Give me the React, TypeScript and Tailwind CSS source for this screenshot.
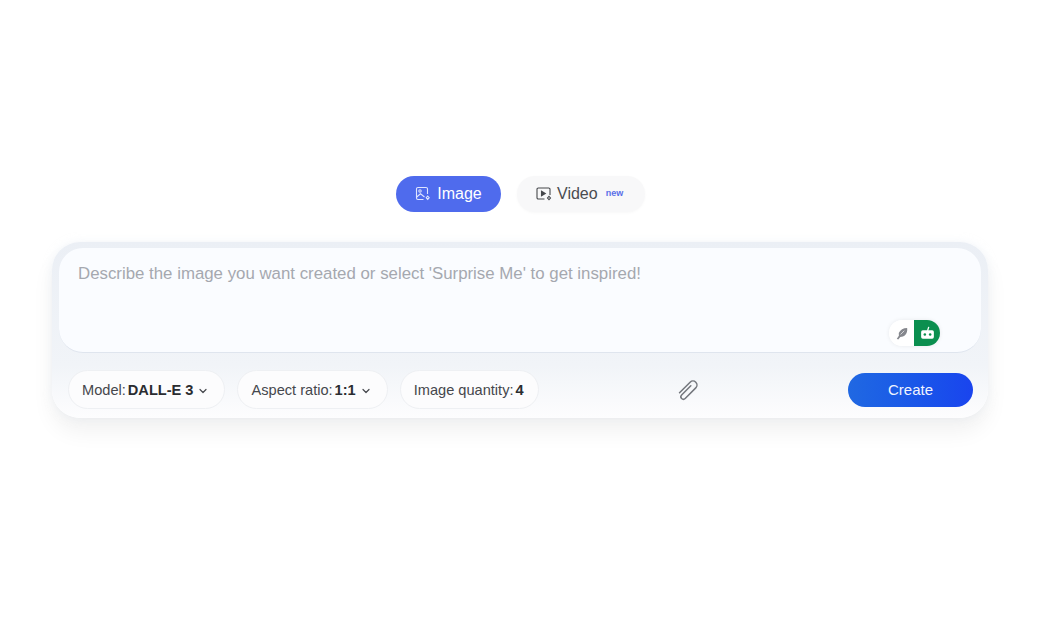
import { ChevronDown } from "lucide-react";

function ImageIcon({ className }: { className?: string }) {
  return (
    <svg viewBox="0 0 16 16" fill="none" stroke="currentColor" strokeWidth="1.1" className={className}>
      <path d="M8.500 13.500H3a1.500 1.500 0 0 1-1.500-1.500V3A1.500 1.500 0 0 1 3 1.500h8A1.500 1.500 0 0 1 12.500 3v5" />
      <circle cx="5" cy="5" r="1.200" />
      <path d="M1.700 11 5.500 7.800 9.500 11" />
      <path d="m12.700 10 1.500 1.700-1.500 1.700-1.500-1.700z" />
    </svg>
  );
}

function VideoIcon({ className }: { className?: string }) {
  return (
    <svg viewBox="0 0 16 16" fill="none" stroke="currentColor" strokeWidth="1.1" className={className}>
      <path d="M8.500 13H2.300A1.300 1.300 0 0 1 1 11.700V3.300A1.300 1.300 0 0 1 2.300 2h10.400A1.300 1.300 0 0 1 14 3.300V9" />
      <path d="M5.500 5.200v4.600l3.800-2.300z" fill="currentColor" />
      <path d="m13 10.300 1.500 1.700-1.500 1.700-1.500-1.700z" />
    </svg>
  );
}

function Pill({ label, value, chevron }: { label: string; value: string; chevron?: boolean }) {
  return (
    <div className="flex h-[39px] items-center rounded-[20px] border border-[#eef0f3] bg-[#fcfcfd] pl-[13px] pr-[14px] pt-[2px] text-[14.6px] text-[#45474c]">
      <span>{label}</span>
      <b className="ml-[2px] font-bold text-[#2a2c30]">{value}</b>
      {chevron && <ChevronDown className="ml-[4px] mr-[1px] size-[12px]" strokeWidth={2.4} />}
    </div>
  );
}

export default function App() {
  return (
    <div className="h-[620px] w-[1050px] overflow-hidden bg-white pt-[176px] font-['Liberation_Sans',Arial,sans-serif]">
      <div className="ml-[396px] flex items-center gap-4">
        <button className="flex h-9 w-[105px] items-center justify-center gap-[6px] rounded-[18px] bg-[#4f6bed] text-[16px] text-white">
          <ImageIcon className="size-[16px] text-[#dfe5ff]" />
          Image
        </button>
        <button className="flex h-9 w-[128px] items-center gap-[5px] rounded-[18px] bg-[#f8f8f9] pl-[19px] text-[16px] text-[#4a4c50] shadow-[0_1px_3px_rgba(0,0,0,0.03)]">
          <VideoIcon className="size-[16px] text-[#45474b]" />
          Video
          <span className="mb-[1px] ml-[3px] text-[9px] font-bold text-[#5a70e8]">new</span>
        </button>
      </div>

      <div className="ml-[52px] mt-[30px] h-[176px] w-[936px] rounded-[28px] bg-gradient-to-b from-[#ebeff5] via-[#f1f4f8] via-70% to-[#fdfdfe] px-[7px] pt-[6px] shadow-[0_14px_22px_rgba(0,0,0,0.055),0_0_10px_rgba(220,228,240,0.35)]">
        <div className="relative h-[105px] rounded-[24px] border-b border-[#dfe5ee] bg-[#fafcff] px-[19px] pt-[13px] text-[16.84px] text-[#a5a8af]">
          Describe the image you want created or select 'Surprise Me' to get inspired!
          <div className="absolute bottom-[6px] right-[41px] flex h-[26px] w-[51px] overflow-hidden rounded-[13px] shadow-[0_0_4px_rgba(0,0,0,0.08)]">
            <div className="flex w-[25px] items-center justify-center bg-white">
              <svg viewBox="0 0 16 16" className="size-[15px] text-[#85878d]" fill="currentColor">
                <path d="M14 2c.6 3.800-1 7.800-4.500 9.300l-2.800.4-2.200 2.800-1.500-1 2.200-3-.1-3C6.500 4 10 2 14 2z" />
                <path d="m7 9 4-4" stroke="#fff" strokeWidth="0.7" />
              </svg>
            </div>
            <div className="flex flex-1 items-center justify-center bg-[#0b8f4f]">
              <svg viewBox="0 0 16 16" className="size-[17px]">
                <path d="M9.200 1.800 8 5.500" stroke="#fff" strokeWidth="1.200" fill="none" />
                <rect x="2" y="5" width="12" height="8" rx="1.600" fill="#fff" />
                <circle cx="5.500" cy="9" r="1.200" fill="#0b8f4f" />
                <circle cx="10.500" cy="9" r="1.200" fill="#0b8f4f" />
              </svg>
            </div>
          </div>
        </div>

        <div className="mt-[17px] flex items-center pl-[9px] pr-[8px]">
          <div className="flex gap-3">
            <Pill label="Model:" value="DALL-E 3" chevron />
            <Pill label="Aspect ratio:" value="1:1" chevron />
            <Pill label="Image quantity:" value="4" />
          </div>
          <svg viewBox="0 0 28 28" fill="none" stroke="#74777d" strokeWidth="1.500" strokeLinecap="round" className="ml-[135px] size-[28px] rotate-45">
            <path d="M10 22V7a4 4 0 0 1 8 0v15a2.500 2.500 0 0 1-5 0V9" />
          </svg>
          <button className="ml-auto h-[34px] w-[125px] rounded-[17px] bg-gradient-to-r from-[#2068e2] to-[#1a44ee] pt-px text-[15px] text-[#f0f4ff]">
            Create
          </button>
        </div>
      </div>
    </div>
  );
}
